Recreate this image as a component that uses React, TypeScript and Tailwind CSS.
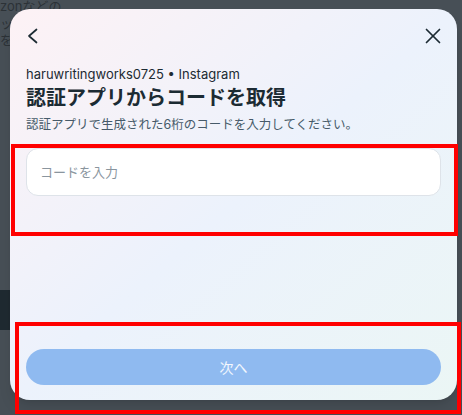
import React from 'react';

export default function App() {
  const [code, setCode] = React.useState('');

  return (
    <div
      className="relative w-[462px] h-[415px] overflow-hidden bg-[#474f56]"
      style={{ fontFamily: 'Inter, "Noto Sans CJK JP", sans-serif' }}
    >
      {/* page behind the dimmed overlay */}
      <div className="absolute left-0 top-[-2px] text-[13px] leading-[17px] text-[#2c3237]">
        <div>zonなどの</div>
        <div>ッ</div>
        <div>を</div>
      </div>
      <div className="absolute left-0 top-[290px] w-[10px] h-[40px] bg-[#1f2a31]" />

      {/* modal */}
      <div className="pt-[9px] pl-[10px]">
        <div className="relative flex flex-col w-[447px] h-[391px] rounded-[20px] bg-gradient-to-br from-[#fdf2f5] via-[#ecf2fc] to-[#ebf6f5] px-[16px] pb-[15px] shadow-lg">
          <div className="flex items-center justify-between h-[24px] mt-[15px]">
            <button className="text-[#1c2b33]">
              <svg width="16" height="16" viewBox="0 0 16 16" fill="none" stroke="currentColor" strokeWidth="1.7" strokeLinecap="round" strokeLinejoin="round">
                <polyline points="10.5,1.5 3,8 10.5,14.5" />
              </svg>
            </button>
            <button className="text-[#1c2b33]">
              <svg width="16" height="16" viewBox="0 0 16 16" fill="none" stroke="currentColor" strokeWidth="1.7" strokeLinecap="round">
                <line x1="1.5" y1="1.5" x2="14.5" y2="14.5" />
                <line x1="14.5" y1="1.5" x2="1.5" y2="14.5" />
              </svg>
            </button>
          </div>

          <div className="mt-[18px] text-[13px] leading-[16px] text-[#1c2b33]">
            haruwritingworks0725 • Instagram
          </div>
          <h1 className="mt-[3px] text-[20px] leading-[26px] font-bold text-[#1c2b33]">
            認証アプリからコードを取得
          </h1>
          <p className="mt-[5px] text-[12.5px] leading-[18px] text-[#465a69]">
            認証アプリで生成された6桁のコードを入力してください。
          </p>

          <input
            value={code}
            onChange={(e) => setCode(e.target.value)}
            placeholder="コードを入力"
            className="mt-[14px] h-[48px] w-full rounded-[12px] border border-[#dee3e9] bg-white px-[13px] text-[13px] text-[#1c2b33] placeholder:text-[#8a959e] outline-none"
          />

          <div className="flex-1" />

          <button className="h-[36px] w-full rounded-full bg-[#8fbaf0] text-[14px] text-white/90">
            次へ
          </button>
        </div>
      </div>

      {/* annotation boxes */}
      <div className="absolute left-[11px] top-[144px] w-[447px] h-[92px] border-[4px] border-[#ff0000]" />
      <div className="absolute left-[15px] top-[322px] w-[446px] h-[92px] border-[4px] border-[#ff0000]" />
    </div>
  );
}
